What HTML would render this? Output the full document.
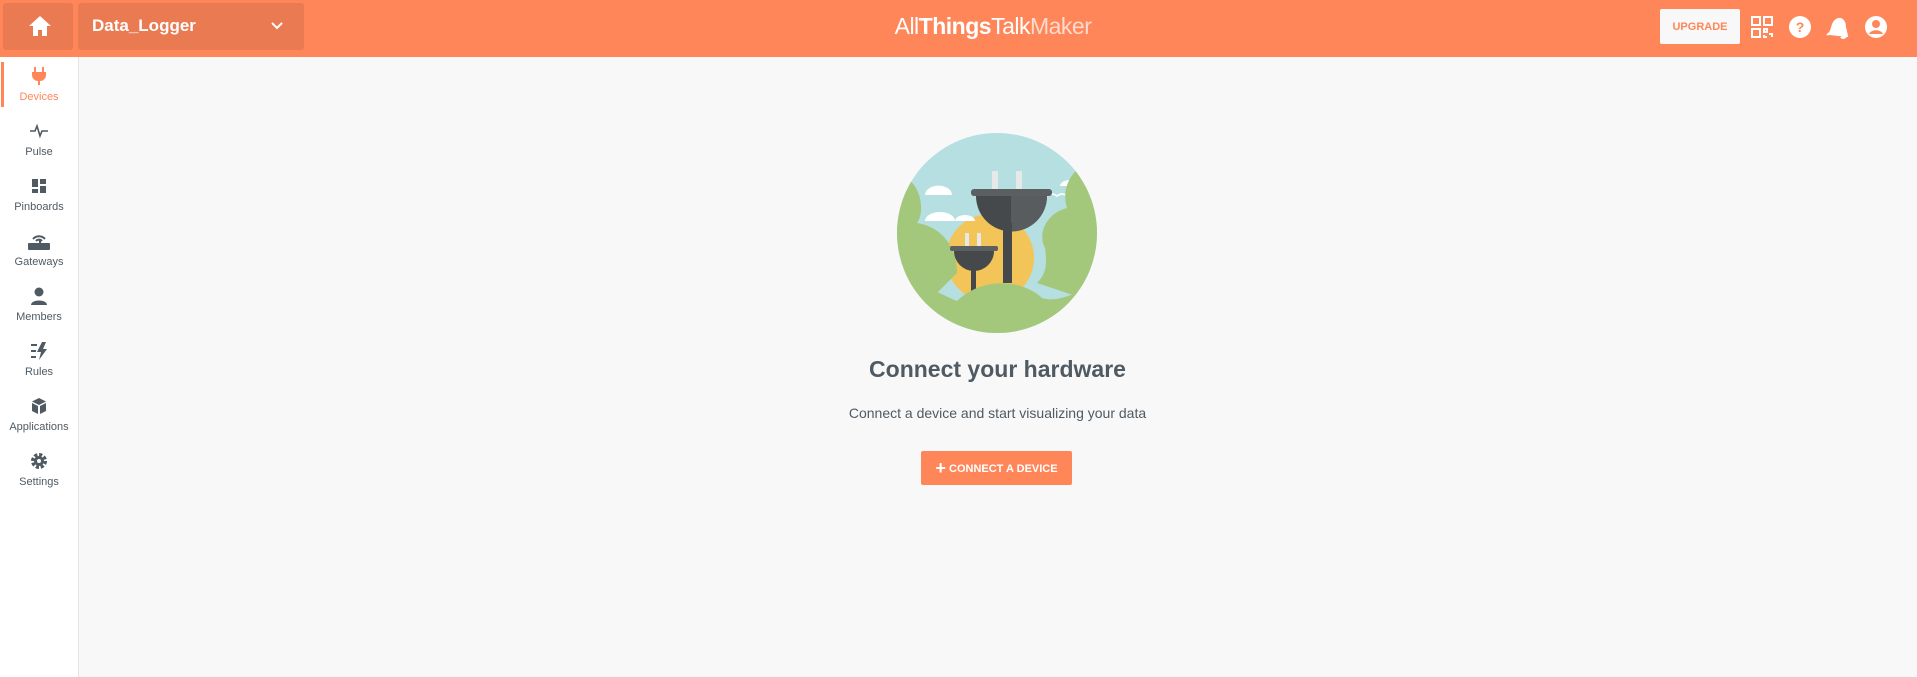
<!DOCTYPE html>
<html><head><style>
body{margin:0;width:1917px;height:677px;background:#f8f8f8;font-family:"Liberation Sans",sans-serif;overflow:hidden;position:relative}
.hdr{position:absolute;left:0;top:0;width:1917px;height:57px;background:#ff8659}
.home{position:absolute;left:3px;top:3px;width:70px;height:47px;background:#e97a52;border-radius:3px}
.dd{position:absolute;left:78px;top:3px;width:226px;height:47px;background:#e97a52;border-radius:3px;color:#fff;font-weight:bold;font-size:17px}
.side{position:absolute;left:0;top:57px;width:78px;height:620px;background:#fff;border-right:1px solid #e4e4e4}
.it{position:absolute;left:0;width:78px;text-align:center;font-size:11px;color:#4f5a63}
.it svg{display:block;margin:0 auto 6px}
</style></head><body>
<div class="hdr">
<div class="home"><svg width="70" height="47" viewBox="0 0 70 47"><path d="M26 23 L37 13 L48 23 H44 V33 H39 V27 H35 V33 H30 V23Z" fill="#fff"/></svg></div>
<div class="dd"><span style="position:absolute;left:14px;top:13px">Data_Logger</span><svg style="position:absolute;left:192px;top:18px" width="14" height="10"><path d="M2 2 L7 7 L12 2" stroke="#fff" stroke-width="2" fill="none"/></svg></div>
<div style="position:absolute;left:880px;width:226px;top:13px;text-align:center;color:#fff;font-size:23px;letter-spacing:-0.5px">All<b>Things</b>Talk<span style="opacity:.7">Maker</span></div>
<div style="position:absolute;left:1660px;top:9px;width:80px;height:35px;background:#f8f8f8;border-radius:2px;color:#ff8659;font-size:11px;font-weight:bold;display:flex;align-items:center;justify-content:center">UPGRADE</div>
<svg style="position:absolute;left:1750px;top:15px" width="24" height="24" viewBox="0 0 24 24" fill="none" stroke="#fff" stroke-width="2"><rect x="2" y="2" width="8" height="8"/><rect x="14" y="2" width="8" height="8"/><rect x="2" y="14" width="8" height="8"/><path d="M14 14h3v3h-3zM19 19h3v3M14 20v2h3"/></svg>
<svg style="position:absolute;left:1788px;top:15px" width="24" height="24" viewBox="0 0 24 24"><circle cx="12" cy="12" r="11" fill="#fff"/><text x="12" y="17" text-anchor="middle" font-size="14" font-weight="bold" fill="#ff8659" font-family="Liberation Sans">?</text></svg>
<svg style="position:absolute;left:1825px;top:14px" width="24" height="26" viewBox="0 0 24 26"><path d="M4 20 C8 16 6 8 13 5 C18 4 20 9 20 13 L22 22 Z M2 21 L6 18 M16 23 a3 3 0 0 0 5 -1" fill="#fff" stroke="#fff" stroke-width="2"/></svg>
<svg style="position:absolute;left:1864px;top:15px" width="24" height="24" viewBox="0 0 24 24"><circle cx="12" cy="12" r="11" fill="#fff"/><circle cx="12" cy="9" r="4" fill="#ff8659"/><path d="M5 19 C7 14 17 14 19 19" fill="#ff8659"/></svg>
</div>
<div class="side">
<div style="position:absolute;left:1px;top:5px;width:3px;height:45px;background:#ff8659"></div>
<div class="it" style="top:10px;color:#ff8659"><svg width="18" height="18" viewBox="0 0 18 18"><path d="M5 0v5M13 0v5" stroke="#ff8659" stroke-width="2"/><path d="M2 5h14v3a6 6 0 0 1-6 6v4h-2v-4a6 6 0 0 1-6-6z" fill="#ff8659"/></svg>Devices</div>
<div class="it" style="top:65px"><svg width="20" height="18" viewBox="0 0 20 18"><path d="M1 9h5l2-5 3 10 2-5h6" stroke="#4f5a63" stroke-width="1.6" fill="none"/></svg>Pulse</div>
<div class="it" style="top:120px"><svg width="18" height="18" viewBox="0 0 18 18" fill="#4f5a63"><rect x="2" y="2" width="6" height="8"/><rect x="10" y="2" width="6" height="5"/><rect x="2" y="12" width="6" height="4"/><rect x="10" y="9" width="6" height="7"/></svg>Pinboards</div>
<div class="it" style="top:175px"><svg width="22" height="18" viewBox="0 0 22 18"><path d="M5 7a8 8 0 0 1 12 0M8 9a4 4 0 0 1 6 0" stroke="#4f5a63" stroke-width="2" fill="none"/><rect x="11" y="8" width="2" height="4" fill="#4f5a63"/><rect x="0" y="11" width="22" height="7" rx="1" fill="#4f5a63"/></svg>Gateways</div>
<div class="it" style="top:230px"><svg width="18" height="18" viewBox="0 0 18 18" fill="#4f5a63"><circle cx="9" cy="5" r="4.5"/><path d="M1 18c0-6 16-6 16 0z"/></svg>Members</div>
<div class="it" style="top:285px"><svg width="18" height="18" viewBox="0 0 18 18"><path d="M1 3h6M1 9h5M1 15h5" stroke="#4f5a63" stroke-width="2"/><path d="M12 0 L7 10 H11 L9 18 L17 7 H13 L16 0Z" fill="#4f5a63"/></svg>Rules</div>
<div class="it" style="top:340px"><svg width="18" height="18" viewBox="0 0 18 18" fill="#4f5a63"><path d="M9 1 L16 4.5 L9 8 L2 4.5Z M2 6 L8 9 V17 L2 14Z M10 9 L16 6 V14 L10 17Z"/></svg>Applications</div>
<div class="it" style="top:395px"><svg width="18" height="18" viewBox="0 0 18 18"><circle cx="9" cy="9" r="6" fill="none" stroke="#4f5a63" stroke-width="4" stroke-dasharray="3 1.7"/><circle cx="9" cy="9" r="5" fill="#4f5a63"/><circle cx="9" cy="9" r="2" fill="#fff"/></svg>Settings</div>
</div>
<svg style="position:absolute;left:897px;top:133px" width="200" height="200" viewBox="0 0 200 200">
<defs><clipPath id="c"><circle cx="100" cy="100" r="100"/></clipPath></defs>
<g clip-path="url(#c)">
<rect width="200" height="200" fill="#b5dfe0"/>
<circle cx="93" cy="125" r="44" fill="#f3c457"/>
<path d="M28 62 h27 a13 9 0 0 0 -27 0z M28 88 h30 a15 9 0 0 0 -30 0z M58 88 h20 a10 6 0 0 0 -20 0z M163 53 h20 a10 6 0 0 0 -20 0z" fill="#fff"/>
<path d="M150 63 q5 -4 10 0 q5 -4 10 0" stroke="#fff" stroke-width="1.5" fill="none"/>
<path d="M0 30 L5 43 C25 50 28 80 20 90 C50 95 60 120 60 140 L0 200Z" fill="#a4c87b"/>
<path d="M190 30 C170 40 165 60 170 75 C150 80 140 100 148 115 C150 130 150 140 140 150 L200 170 V20Z" fill="#a4c87b"/>
<rect x="95" y="38" width="6" height="20" fill="#e8e8e8"/><rect x="119" y="38" width="6" height="20" fill="#e8e8e8"/>
<rect x="74" y="56" width="81" height="7" rx="3" fill="#5b5f62"/>
<path d="M79 63 h71 a35 35 0 0 1 -71 0z" fill="#45494c"/>
<path d="M114 63 h36 a35 35 0 0 1 -36 35z" fill="#585c5f"/>
<rect x="106" y="90" width="9" height="60" fill="#45494c"/>
<rect x="68" y="100" width="4" height="14" fill="#e8e8e8"/><rect x="80" y="100" width="4" height="14" fill="#e8e8e8"/>
<rect x="53" y="113" width="48" height="5" rx="2" fill="#5b5f62"/>
<path d="M57 118 h40 a20 20 0 0 1 -40 0z" fill="#45494c"/>
<rect x="74" y="130" width="5" height="38" fill="#45494c"/>
<path d="M0 150 C30 150 50 165 60 168 C90 140 130 150 145 165 C160 170 180 160 200 150 V200 H0Z" fill="#a4c87b"/>
</g></svg>
<div style="position:absolute;left:78px;width:1839px;top:356px;text-align:center;font-size:23px;font-weight:bold;color:#4f5a63">Connect your hardware</div>
<div style="position:absolute;left:78px;width:1839px;top:405px;text-align:center;font-size:14px;color:#4f5a63">Connect a device and start visualizing your data</div>
<div style="position:absolute;left:921px;top:451px;width:151px;height:34px;background:#ff8659;border-radius:2px;color:#fff;font-size:11px;font-weight:bold;text-align:center;line-height:34px"><span style="font-size:18px;vertical-align:-2px">+</span> CONNECT A DEVICE</div>
</body></html>
